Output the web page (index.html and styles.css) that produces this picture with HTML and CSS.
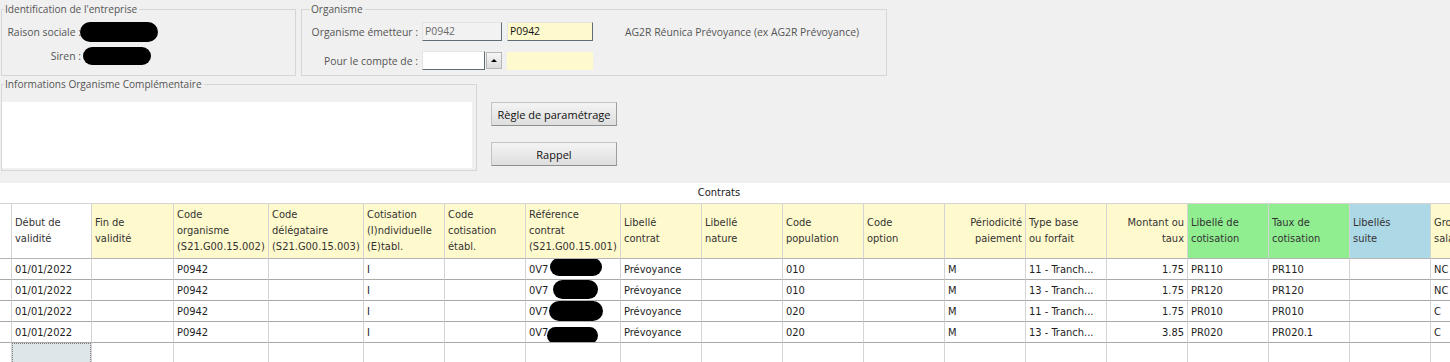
FILE: index.html
```html
<!DOCTYPE html>
<html lang="fr">
<head>
  <meta charset="UTF-8" />
  <title>Contrats</title>
  <link rel="stylesheet" href="styles.css">
</head>
<body>
  <div class="top">
    <div class="group">
      <div class="group-title">Identification de l'entreprise</div>
      <div class="ident-row first">
        <span class="ident-label">Raison sociale :</span>
        <span class="blob blob-raison"></span>
      </div>
      <div class="ident-row second">
        <span class="ident-label">Siren :</span>
        <span class="blob blob-siren"></span>
      </div>
    </div>

    <div class="group">
      <div class="group-title indent">Organisme</div>
      <div class="org-row first">
        <span class="org-label">Organisme émetteur :</span>
        <span class="field field-grey">P0942</span>
        <span class="field field-yellow">P0942</span>
        <span class="org-name">AG2R Réunica Prévoyance (ex AG2R Prévoyance)</span>
      </div>
      <div class="org-row second">
        <span class="org-label">Pour le compte de :</span>
        <span class="field field-white"></span>
        <span class="spin"><i></i></span>
        <span class="field-flat"></span>
      </div>
    </div>
  </div>

  <div class="middle">
    <div class="group group-info">
      <div class="group-title">Informations Organisme Complémentaire</div>
      <div class="memo"></div>
    </div>
    <div class="actions">
      <button class="btn">Règle de paramétrage</button>
      <button class="btn">Rappel</button>
    </div>
  </div>

  <div class="grid">
    <div class="grid-title">Contrats</div>

    <div class="grid-row grid-head">
      <div class="cell"></div>
      <div class="cell">Début de<br>validité</div>
      <div class="cell yellow">Fin de<br>validité</div>
      <div class="cell yellow">Code<br>organisme<br>(S21.G00.15.002)</div>
      <div class="cell yellow">Code<br>délégataire<br>(S21.G00.15.003)</div>
      <div class="cell yellow">Cotisation<br>(I)ndividuelle<br>(E)tabl.</div>
      <div class="cell yellow">Code<br>cotisation<br>établ.</div>
      <div class="cell yellow">Référence<br>contrat<br>(S21.G00.15.001)</div>
      <div class="cell yellow">Libellé<br>contrat</div>
      <div class="cell yellow">Libellé<br>nature</div>
      <div class="cell yellow">Code<br>population</div>
      <div class="cell yellow">Code<br>option</div>
      <div class="cell yellow right">Périodicité<br>paiement</div>
      <div class="cell yellow">Type base<br>ou forfait</div>
      <div class="cell yellow right">Montant ou<br>taux</div>
      <div class="cell green">Libellé de<br>cotisation</div>
      <div class="cell green">Taux de<br>cotisation</div>
      <div class="cell blue">Libellés<br>suite</div>
      <div class="cell yellow">Groupe<br>salariés</div>
    </div>

    <div class="grid-row">
      <div class="cell"></div>
      <div class="cell">01/01/2022</div>
      <div class="cell"></div>
      <div class="cell">P0942</div>
      <div class="cell"></div>
      <div class="cell">I</div>
      <div class="cell"></div>
      <div class="cell">0V7<span class="blob blob-r1"></span></div>
      <div class="cell">Prévoyance</div>
      <div class="cell"></div>
      <div class="cell">010</div>
      <div class="cell"></div>
      <div class="cell">M</div>
      <div class="cell">11 - Tranch...</div>
      <div class="cell right">1.75</div>
      <div class="cell">PR110</div>
      <div class="cell">PR110</div>
      <div class="cell"></div>
      <div class="cell">NC</div>
    </div>

    <div class="grid-row">
      <div class="cell"></div>
      <div class="cell">01/01/2022</div>
      <div class="cell"></div>
      <div class="cell">P0942</div>
      <div class="cell"></div>
      <div class="cell">I</div>
      <div class="cell"></div>
      <div class="cell">0V7<span class="blob blob-r2"></span></div>
      <div class="cell">Prévoyance</div>
      <div class="cell"></div>
      <div class="cell">010</div>
      <div class="cell"></div>
      <div class="cell">M</div>
      <div class="cell">13 - Tranch...</div>
      <div class="cell right">1.75</div>
      <div class="cell">PR120</div>
      <div class="cell">PR120</div>
      <div class="cell"></div>
      <div class="cell">NC</div>
    </div>

    <div class="grid-row">
      <div class="cell"></div>
      <div class="cell">01/01/2022</div>
      <div class="cell"></div>
      <div class="cell">P0942</div>
      <div class="cell"></div>
      <div class="cell">I</div>
      <div class="cell"></div>
      <div class="cell">0V7<span class="blob blob-r3"></span></div>
      <div class="cell">Prévoyance</div>
      <div class="cell"></div>
      <div class="cell">020</div>
      <div class="cell"></div>
      <div class="cell">M</div>
      <div class="cell">11 - Tranch...</div>
      <div class="cell right">1.75</div>
      <div class="cell">PR010</div>
      <div class="cell">PR010</div>
      <div class="cell"></div>
      <div class="cell">C</div>
    </div>

    <div class="grid-row">
      <div class="cell"></div>
      <div class="cell">01/01/2022</div>
      <div class="cell"></div>
      <div class="cell">P0942</div>
      <div class="cell"></div>
      <div class="cell">I</div>
      <div class="cell"></div>
      <div class="cell">0V7<span class="blob blob-r4"></span></div>
      <div class="cell">Prévoyance</div>
      <div class="cell"></div>
      <div class="cell">020</div>
      <div class="cell"></div>
      <div class="cell">M</div>
      <div class="cell">13 - Tranch...</div>
      <div class="cell right">3.85</div>
      <div class="cell">PR020</div>
      <div class="cell">PR020.1</div>
      <div class="cell"></div>
      <div class="cell">C</div>
    </div>

    <div class="grid-row new-row">
      <div class="cell"></div>
      <div class="cell"><span class="focus"></span></div>
      <div class="cell"></div>
      <div class="cell"></div>
      <div class="cell"></div>
      <div class="cell"></div>
      <div class="cell"></div>
      <div class="cell"></div>
      <div class="cell"></div>
      <div class="cell"></div>
      <div class="cell"></div>
      <div class="cell"></div>
      <div class="cell"></div>
      <div class="cell"></div>
      <div class="cell"></div>
      <div class="cell"></div>
      <div class="cell"></div>
      <div class="cell"></div>
      <div class="cell"></div>
    </div>
  </div>
</body>
</html>
```

FILE: styles.css
```css
body {
  margin: 0;
  background-color: #f0f0f0;
  font-family: 'Segoe UI', 'Open Sans', sans-serif;
  font-size: 10.4px;
  color: #555;
  overflow: hidden;
  width: 1450px;
  height: 362px;
}

/* Top group boxes */
.top {
  display: grid;
  grid-template-columns: 295px 586px;
  column-gap: 5px;
  padding: 9px 0 0 1px;
}

.group {
  box-sizing: border-box;
  height: 67px;
  border: 1px solid #d6d6d6;
}

.group-title {
  width: fit-content;
  margin: -8px 0 0 2px;
  padding: 0 2px 0 1px;
  line-height: 15px;
  font-size: 10.1px;
  background-color: #f0f0f0;
  color: #555;
}

.group-title.indent {
  margin-left: 8px;
}

.blob {
  display: inline-block;
  background: #000;
  border-radius: 10px;
}

.ident-row {
  display: flex;
  align-items: center;
  height: 20px;
}

.ident-row.first {
  margin-top: 5px;
}

.ident-row.second {
  margin-top: 4px;
}

.ident-label {
  width: 79px;
  text-align: right;
}

.blob-raison {
  width: 78px;
  height: 20px;
  margin-left: -1px;
}

.blob-siren {
  width: 68px;
  height: 18px;
  margin-left: 2px;
}

.org-row {
  display: flex;
  align-items: center;
  height: 19px;
}

.org-row.first {
  margin-top: 5px;
}

.org-row.second {
  margin-top: 10px;
}

.org-label {
  width: 116px;
  text-align: right;
  margin-right: 4px;
}

.field {
  box-sizing: border-box;
  height: 19px;
  line-height: 17px;
  padding-left: 2px;
  border: 1px solid #e3e3e3;
  border-right-color: #5f6d75;
  border-bottom-color: #5f6d75;
}

.field-grey {
  width: 80px;
  background-color: #f2f2f2;
  color: #6a6a6a;
}

.field-yellow {
  width: 86px;
  margin-left: 5px;
  background-color: #fffacd;
  color: #111;
}

.field-white {
  width: 63px;
  background-color: #fff;
}

.spin {
  box-sizing: border-box;
  width: 16px;
  height: 17px;
  margin-left: 1px;
  border: 1px solid #b5b5b5;
  background: linear-gradient(#f6f6f6, #dcdcdc);
  display: flex;
  align-items: center;
  justify-content: center;
}

.spin i {
  width: 0;
  height: 0;
  border-left: 3px solid transparent;
  border-right: 3px solid transparent;
  border-bottom: 3px solid #000;
}

.field-flat {
  width: 86px;
  height: 18px;
  margin-left: 5px;
  background-color: #fffacd;
}

.org-name {
  margin-left: 32px;
  color: #555;
}

/* Middle part */
.middle {
  display: flex;
  margin-top: 8px;
  padding-left: 1px;
}

.group-info {
  width: 476px;
  height: 87px;
}

.memo {
  width: 470px;
  height: 66px;
  margin-top: 10px;
  background: #fff;
}

.actions {
  display: flex;
  flex-direction: column;
  gap: 16px;
  margin-left: 14px;
  padding-top: 18px;
}

.btn {
  box-sizing: border-box;
  width: 126px;
  height: 24px;
  padding: 0;
  font-family: inherit;
  font-size: 11px;
  color: #111;
  background: linear-gradient(#f4f4f4, #dedede);
  border: 1px solid #c4c4c4;
  border-bottom-color: #8f8f8f;
  border-right-color: #9d9d9d;
}

/* Contracts grid */
.grid {
  margin-top: 12px;
  background: #fff;
  font-family: 'DejaVu Sans', sans-serif;
  font-stretch: condensed;
  font-size: 11px;
  color: #1e1e1e;
}

.grid-title {
  height: 20px;
  line-height: 19px;
  text-align: center;
  padding-right: 12px;
  color: #222;
  border-bottom: 1px solid #d4d4d4;
}

.grid-row {
  display: grid;
  grid-template-columns: 12px 80px 82px 95px 95px 81px 81px 95px repeat(11, 81px);
  height: 21px;
}

.grid-head {
  height: 55px;
  color: #333;
  line-height: 16px;
}

.cell {
  box-sizing: border-box;
  border-right: 1px solid #d4d4d4;
  border-bottom: 1px solid #a9a9a9;
  padding: 0 3px;
  display: flex;
  align-items: center;
  white-space: nowrap;
  overflow: hidden;
}

.grid-head .cell {
  border-bottom-color: #b4b4b4;
}

.cell.right {
  justify-content: flex-end;
  text-align: right;
}

.cell.yellow {
  background-color: #fffacd;
}

.cell.green {
  background-color: #90ee90;
}

.cell.blue {
  background-color: #add8e6;
}

.blob-r1 {
  width: 52px;
  height: 18px;
  margin-left: 2px;
  transform: translateY(-2px);
}

.blob-r2 {
  width: 45px;
  height: 19px;
  margin-left: 5px;
  transform: translateY(-1px);
}

.blob-r3 {
  width: 54px;
  height: 20px;
  margin-left: 1px;
}

.blob-r4 {
  width: 51px;
  height: 17px;
  margin-left: -1px;
  transform: translateY(3px);
}

.new-row .cell {
  border-bottom: none;
}

.new-row .cell:nth-child(2) {
  padding: 0;
  align-items: stretch;
}

.focus {
  flex: 1;
  background-color: #dfe6ea;
  border: 1px dotted #7a7a7a;
}
```
